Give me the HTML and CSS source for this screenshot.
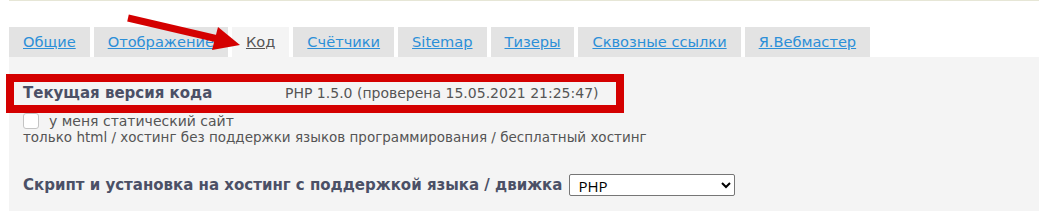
FILE: index.html
```
<!DOCTYPE html>
<html>

<head>
    <meta charset='utf-8'>
    <title>Настройки кода</title>
    <meta name='viewport' content='width=device-width, initial-scale=1'>
    <link rel="stylesheet" href="styles.css">
</head>

<body>
    <div class="topLine"></div>
    <div class="tabs">
        <a class="tab" href="#">Общие</a>
        <a class="tab" href="#">Отображение</a>
        <a class="tab active" href="#">Код</a>
        <a class="tab" href="#">Счётчики</a>
        <a class="tab" href="#">Sitemap</a>
        <a class="tab" href="#">Тизеры</a>
        <a class="tab" href="#">Сквозные ссылки</a>
        <a class="tab" href="#">Я.Вебмастер</a>
    </div>
    <div class="panel">
        <div class="versionRow">
            <span class="label">Текущая версия кода</span>
            <span class="value">PHP 1.5.0 (проверена 15.05.2021 21:25:47)</span>
        </div>
        <label class="checkRow">
            <input type="checkbox" class="check">
            <span>у меня статический сайт</span>
        </label>
        <div class="hint">только html / хостинг без поддержки языков программирования / бесплатный хостинг</div>
        <div class="scriptRow">
            <span class="label">Скрипт и установка на хостинг с поддержкой языка / движка</span>
            <select class="engine">
                <option>PHP</option>
                <option>ASP.NET</option>
                <option>Perl</option>
            </select>
        </div>
    </div>

    <!-- annotation overlays -->
    <div class="redBox"></div>
    <svg class="arrow" width="260" height="60" viewBox="0 0 260 60">
        <line x1="128" y1="18" x2="218" y2="39" stroke="#d40000" stroke-width="7" />
        <polygon points="218,27 212,50 240,45" fill="#d40000" />
    </svg>
</body>

</html>
```

FILE: styles.css
```
body {
    background: white;
    color: #555;
    font-family: "DejaVu Sans", Verdana, sans-serif;
    font-size: 14px;
    margin: 0;
}

.topLine {
    border-top: 1px solid #e6e6d6;
    height: 26px;
    margin-left: 9px;
}

.tabs {
    display: flex;
    gap: 4px;
    margin-left: 9px;
}

.tab {
    background-color: #e3e3e3;
    color: #2b8fd8;
    font-size: 14.6px;
    height: 30px;
    line-height: 30px;
    padding: 0 14px;
}

.tab.active {
    background-color: #f4f4f4;
    color: #555;
}

.panel {
    background-color: #f4f4f4;
    height: 129px;
    margin-left: 9px;
    padding: 25px 0 0 14px;
}

.label {
    color: #4b5066;
    font-size: 15px;
    font-weight: bold;
}

.versionRow {
    display: flex;
    line-height: 23px;
}

.versionRow .label {
    width: 262px;
}

.checkRow {
    align-items: center;
    display: flex;
    gap: 10px;
    line-height: 16px;
    margin-top: 8px;
}

.check {
    appearance: none;
    background: white;
    border: 1px solid #c4c4c4;
    border-radius: 3px;
    height: 16px;
    margin: 0;
    width: 16px;
}

.hint {
    font-size: 13.5px;
    line-height: 17px;
}

.scriptRow {
    align-items: center;
    display: flex;
    gap: 7px;
    margin-top: 28px;
}

.engine {
    background: white;
    border: 1px solid #767676;
    border-radius: 2px;
    color: black;
    font-family: "Open Sans", sans-serif;
    font-size: 15px;
    height: 22px;
    padding: 0 4px;
    width: 166px;
}

.redBox {
    border: 8px solid #d40000;
    box-sizing: border-box;
    height: 39px;
    left: 6px;
    position: absolute;
    top: 74px;
    width: 618px;
}

.arrow {
    left: 0;
    position: absolute;
    top: 0;
}
```
